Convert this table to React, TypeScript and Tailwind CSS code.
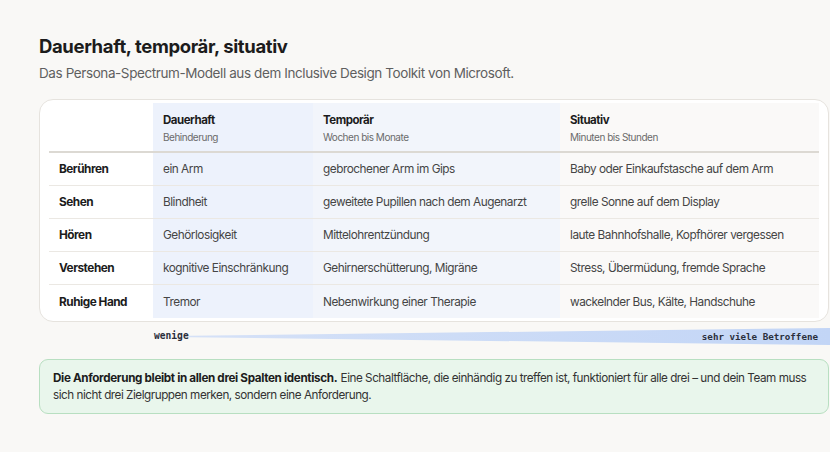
const rows = [
  ["Berühren", "ein Arm", "gebrochener Arm im Gips", "Baby oder Einkaufstasche auf dem Arm"],
  ["Sehen", "Blindheit", "geweitete Pupillen nach dem Augenarzt", "grelle Sonne auf dem Display"],
  ["Hören", "Gehörlosigkeit", "Mittelohrentzündung", "laute Bahnhofshalle, Kopfhörer vergessen"],
  ["Verstehen", "kognitive Einschränkung", "Gehirnerschütterung, Migräne", "Stress, Übermüdung, fremde Sprache"],
  ["Ruhige Hand", "Tremor", "Nebenwirkung einer Therapie", "wackelnder Bus, Kälte, Handschuhe"],
];

const heads = [
  ["Dauerhaft", "Behinderung"],
  ["Temporär", "Wochen bis Monate"],
  ["Situativ", "Minuten bis Stunden"],
];

const colBg = ["bg-white", "bg-[#edf2fc]", "bg-[#f2f5fb]", "bg-[#faf9f8]"];

export default function App() {
  return (
    <div className="min-h-screen w-full bg-[#f9f8f6] font-['Inter',sans-serif] text-[#1c1c1c] pl-[39px] pt-[35px] overflow-hidden">
      <div className="w-[790px]">
        <h1 className="text-[18.5px] font-bold tracking-[-0.02em] leading-[22px]">Dauerhaft, temporär, situativ</h1>
        <p className="mt-[6px] text-[13.5px] text-[#5f5f5f] leading-[20px] tracking-[-0.03em]">
          Das Persona-Spectrum-Modell aus dem Inclusive Design Toolkit von Microsoft.
        </p>

        {/* Table card */}
        <div className="mt-[16px] bg-white border border-[#e6e3de] rounded-[14px] px-[9px] py-[3px] tracking-[-0.03em]">
          <div className="grid grid-cols-[104px_160px_247px_259px]">
            {/* header */}
            <div className={`${colBg[0]} h-[50px] border-b-2 border-[#dcd9d3]`} />
            {heads.map(([t, s], i) => (
              <div key={t} className={`${colBg[i + 1]} h-[50px] border-b-2 border-[#dcd9d3] pl-[10px] pt-[9px]`}>
                <div className="text-[11.5px] font-bold leading-[16px]">{t}</div>
                <div className="mt-[2px] text-[10px] text-[#6b6b6b] leading-[14px]">{s}</div>
              </div>
            ))}
            {rows.map((r, ri) =>
              r.map((c, ci) => (
                <div
                  key={ri + "-" + ci}
                  className={`${colBg[ci]} h-[33px] flex items-center pl-[10px] pt-[2px] text-[11.8px] ${
                    ri < rows.length - 1 ? "border-b border-[#ebe8e3]" : ""
                  } ${ci === 0 ? "font-bold text-[#1c1c1c]" : "text-[#454545]"}`}
                >
                  {c}
                </div>
              ))
            )}
          </div>
        </div>

        {/* spectrum bar */}
        <div className="mt-[6px] ml-[115px] flex items-center h-[17px] relative w-[676px]">
          <span className="font-['DejaVu_Sans_Mono',monospace] font-bold text-[9.6px] text-[#2a2f3c]">wenige</span>
          <svg className="flex-1 h-[17px]" viewBox="0 0 100 16" preserveAspectRatio="none">
            <defs>
              <linearGradient id="bar" x1="0" y1="0" x2="1" y2="0">
                <stop offset="0" stopColor="#d5e1f7" />
                <stop offset="1" stopColor="#c2d5f6" />
              </linearGradient>
            </defs>
            <polygon points="0,7.3 100,0 100,16 0,8.7" fill="url(#bar)" />
          </svg>
          <span className="absolute right-[12px] font-['DejaVu_Sans_Mono',monospace] font-bold text-[9.2px] text-[#2a2f3c]">
            sehr viele Betroffene
          </span>
        </div>

        {/* note */}
        <div className="mt-[14px] bg-[#e9f6ec] border border-[#b8dfc1] rounded-[9px] px-[13px] py-[10px] text-[11.7px] leading-[16.5px] text-[#333]">
          <b className="text-[#1c1c1c] tracking-[-0.03em]">Die Anforderung bleibt in allen drei Spalten identisch.</b>{" "}
          <span className="tracking-[-0.04em]">
            Eine Schaltfläche, die einhändig zu treffen ist, funktioniert für alle drei – und dein Team muss
            <br />
            sich nicht drei Zielgruppen merken, sondern eine Anforderung.
          </span>
        </div>
      </div>
    </div>
  );
}
